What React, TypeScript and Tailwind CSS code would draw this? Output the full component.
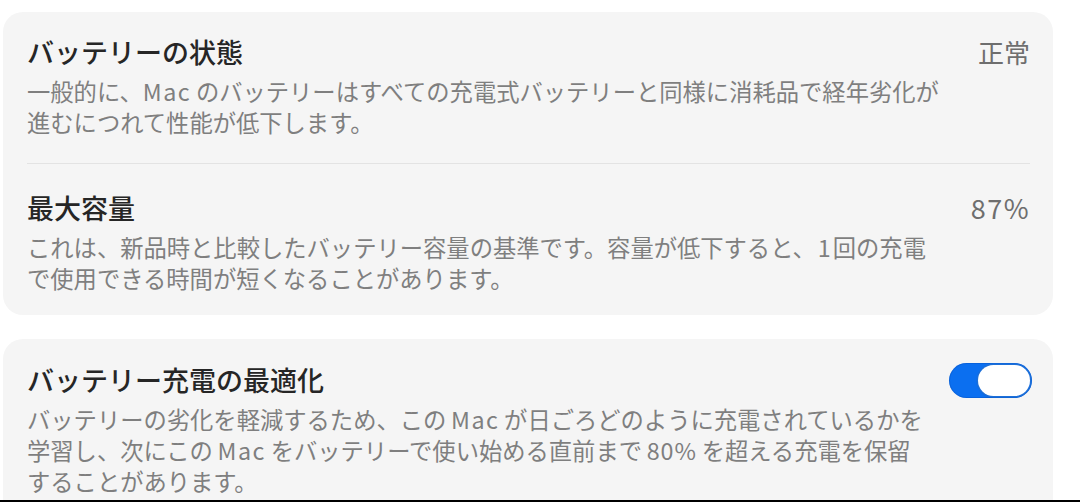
export default function App() {
  const font = { fontFamily: '"Noto Sans CJK JP", "Noto Sans", sans-serif' };

  return (
    <div className="w-[1080px] h-[502px] bg-white flex flex-col" style={font}>
      <div className="h-[500px] overflow-hidden pl-[3px] pr-[27px] pt-[12px] flex flex-col gap-[24px]">
        {/* battery health card */}
        <div className="bg-[#f5f5f5] rounded-[20px] px-[24px] pr-[23px]">
          <div className="pt-[22px] pb-[25px] border-b border-[#e3e3e3]">
            <div className="flex items-start justify-between">
              <h2 className="text-[27px] leading-[36px] font-medium text-[#262626]">バッテリーの状態</h2>
              <span className="text-[26px] leading-[36px] text-[#6e6e6e]">正常</span>
            </div>
            <p className="mt-[6px] text-[23.3px] leading-[31px] text-[#7f7f7f] whitespace-nowrap">
              一般的に、<span className="tracking-[1.5px]">Mac</span>&#8201;のバッテリーはすべての充電式バッテリーと同様に消耗品で経年劣化が
              <br />
              進むにつれて性能が低下します。
            </p>
          </div>
          <div className="pt-[26px] pb-[21px]">
            <div className="flex items-start justify-between">
              <h2 className="text-[27px] leading-[36px] font-medium text-[#262626]">最大容量</h2>
              <span className="text-[27px] leading-[36px] tracking-[1.5px] text-[#6e6e6e]">87%</span>
            </div>
            <p className="mt-[6px] text-[23.3px] leading-[31px] text-[#7f7f7f] whitespace-nowrap">
              これは、新品時と比較したバッテリー容量の基準です。容量が低下すると、<span className="px-[2px]">1</span>回の充電
              <br />
              で使用できる時間が短くなることがあります。
            </p>
          </div>
        </div>

        {/* optimized charging card */}
        <div className="bg-[#f5f5f5] rounded-[20px] px-[24px] pr-[21px] pt-[23px] pb-[24px]">
          <div className="flex items-center justify-between">
            <h2 className="text-[27px] leading-[36px] font-medium text-[#262626]">バッテリー充電の最適化</h2>
            <div className="w-[83px] h-[35px] rounded-full bg-[#0b6ff0] p-[2px] flex justify-end shadow-[inset_0_0_0_1px_rgba(0,60,160,0.25)]">
              <div className="w-[52px] h-[31px] rounded-full bg-white shadow-[0_0_0_1.5px_#1d6fd8,0_1px_2px_rgba(0,0,0,0.2)]" />
            </div>
          </div>
          <p className="mt-[6px] text-[23.3px] leading-[31px] text-[#7f7f7f] whitespace-nowrap">
            バッテリーの劣化を軽減するため、この&#8201;<span className="tracking-[1.5px]">Mac</span>&#8201;が日ごろどのように充電されているかを
            <br />
            学習し、次にこの&#8201;<span className="tracking-[1.5px]">Mac</span>&#8201;をバッテリーで使い始める直前まで&#8201;<span className="tracking-[1px]">80%</span>&#8201;を超える充電を保留
            <br />
            することがあります。
          </p>
        </div>
      </div>
      <div className="h-[2px] bg-black" />
    </div>
  );
}
